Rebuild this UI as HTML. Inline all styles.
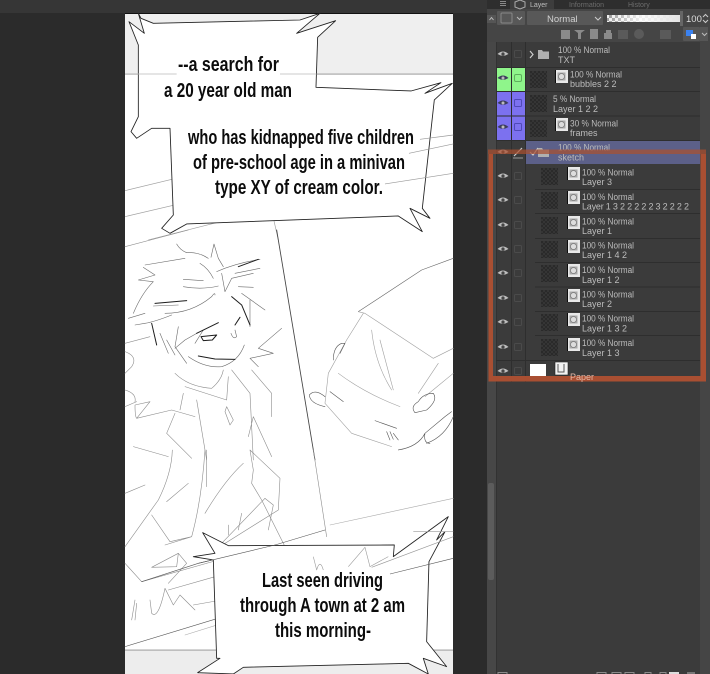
<!DOCTYPE html>
<html><head><meta charset="utf-8"><style>
html,body{margin:0;padding:0;background:#2b2b2b;width:710px;height:674px;overflow:hidden}
svg{display:block}
.t{font-family:"Liberation Sans Narrow","Liberation Sans",sans-serif;font-weight:bold;font-size:20px;fill:#0c0c0c}
.l{font-family:"Liberation Sans",sans-serif;font-size:9px;fill:#bdbdbd}
</style></head><body>
<svg width="710" height="674" viewBox="0 0 710 674" xmlns="http://www.w3.org/2000/svg">
<defs>
<filter id="b" x="-2%" y="-2%" width="104%" height="104%"><feGaussianBlur stdDeviation="0.35"/></filter>
<pattern id="ck" width="4" height="4" patternUnits="userSpaceOnUse"><rect width="4" height="4" fill="#353535"/><rect width="2" height="2" fill="#2b2b2b"/><rect x="2" y="2" width="2" height="2" fill="#2b2b2b"/></pattern>
<pattern id="wc" width="6" height="6" patternUnits="userSpaceOnUse"><rect width="6" height="6" fill="#eee"/><rect width="3" height="3" fill="#999"/><rect x="3" y="3" width="3" height="3" fill="#999"/></pattern>
<linearGradient id="fade"><stop offset="0" stop-color="#fff" stop-opacity="0"/><stop offset=".45" stop-color="#fff" stop-opacity=".85"/><stop offset="1" stop-color="#e4e4e4"/></linearGradient>
<g id="eye"><path d="M-5.500,0Q0,-5 5.500,0Q0,3.500 -5.500,0Z" fill="#bdbdbd"/><circle r="1.600" fill="#444"/></g>
<g id="eyed"><path d="M-5.500,0Q0,-5 5.500,0Q0,3.500 -5.500,0Z" fill="#3c3c5c"/><circle r="1.500" fill="#bbb"/></g>
<g id="box"><rect x="-3.500" y="-3.500" width="7" height="7" rx="1" fill="none" stroke="#4c4c4c"/></g>
<g id="chk"><rect width="17" height="17" fill="url(#ck)"/></g>
<g id="th"><rect width="13" height="13" fill="#e8e8e8"/><rect x="0" y="0" width="1" height="13" fill="#111"/><rect x="2.500" y="2.500" width="8" height="8" fill="#aaa"/><circle cx="6.500" cy="6.500" r="3" fill="#ddd" stroke="#777" stroke-width=".7"/></g>
<g id="fo"><path d="M0,2H4L5,3.500H11V11H0Z" fill="#b0b0b0"/></g>
</defs>

<rect width="710" height="674" fill="#2b2b2b"/>
<rect width="487" height="13" fill="#363636"/>

<!-- canvas -->
<rect x="125" y="13" width="328" height="661" fill="#fff"/>
<rect x="125" y="13" width="328" height="1" fill="#111"/>
<rect x="125" y="14" width="328" height="60" fill="#efefef"/>
<rect x="125" y="73.500" width="328" height="1.200" fill="#aaa"/>
<rect x="125" y="650" width="328" height="24" fill="#ededed"/>
<rect x="125" y="649.500" width="328" height="1.200" fill="#aaa"/>

<g filter="url(#b)">
<!-- top panel speed lines -->
<g transform="translate(125,0) scale(.3333)" fill="none" stroke="#a0a0a0" stroke-width="2">
<path d="M0,572L195,525M0,650L255,590M70,720L385,640M445,640L565,603M435,610L460,720"/>
</g>

<!-- character & van -->
<g transform="translate(125,230) scale(.3333)" fill="none" stroke="#8c8c8c" stroke-width="1.800" stroke-linecap="round" stroke-linejoin="round">
<path d="M0,50L190,0"/>
<path d="M455,0L570,690" stroke="#444" stroke-width="2.600"/>
<path d="M155,42Q165,60 185,68Q220,65 250,85M258,82L267,42L280,85L295,110M275,125Q330,100 405,88M330,130L405,115M60,105L180,85M55,112L90,135L40,150L85,155Q50,190 25,250M10,265L60,250M175,148L235,152M175,170Q230,180 280,168M225,100Q250,115 265,145M290,130L300,185L320,145L385,130M340,170L385,172M85,228L160,225M120,250Q200,250 260,200Q270,185 270,195M30,285L60,280Q90,275 140,255M105,310L130,370M125,330L150,375M160,290L150,350L185,400M150,355L180,330L215,310M210,340L235,300M190,380Q240,415 290,410Q340,395 358,345M318,310Q325,330 335,320L330,300M350,190L420,240M375,290L375,210M470,295L400,355L445,370L375,385L400,410" stroke="#6a6a6a"/>
<path d="M90,220L185,212M215,310L280,278M80,280L95,345M228,320L275,315L262,330L235,332ZM220,378L270,387L330,388M320,200L350,225L375,285M330,285L345,262M340,110L400,88" stroke="#1c1c1c" stroke-width="3"/>
<path d="M150,430Q190,470 260,475Q290,450 295,420M320,420L375,490L385,690M380,420L440,490L440,560M175,490L165,540M310,440L305,510L180,470M305,530L325,570L315,585L300,545ZM35,565L75,515L30,525Q30,560 35,565L140,540L210,560M215,510L245,690M150,550L125,610L200,685M25,650L130,680M370,620L385,560L440,680M0,530L35,515M0,365Q40,380 20,410L0,430M0,340L75,320M0,480Q35,490 30,515"/>
<path d="M700,245L890,120L985,85" stroke="#666"/>
<path d="M700,245L720,250L925,385M715,250L665,330L610,430L600,520L680,610L800,650M640,430Q720,490 825,530M740,300Q750,400 800,480M765,330L805,480M925,385L985,355M880,490L940,400M900,500L985,430" stroke="#a0a0a0"/>
<path d="M625,390Q625,350 650,340L660,340L645,370M615,485L655,515M600,530Q555,520 553,495Q570,475 600,500M880,515Q895,490 925,490Q940,510 905,540L870,548Q855,530 880,515M820,660Q880,650 900,610L960,560L980,545M905,640Q960,620 985,560M900,610Q895,640 915,640M750,572L815,595M785,605L795,630M795,605L805,628M805,610L820,630" stroke="#555"/>
</g>

<g transform="translate(125,450) scale(.3333)" fill="none" stroke="#8c8c8c" stroke-width="1.800" stroke-linecap="round" stroke-linejoin="round">
<path d="M142,0Q140,70 100,150L0,290M80,195L135,275L200,260Q230,150 240,0M245,0L245,110M0,130L60,105M125,155L190,100M240,190Q300,90 355,40M375,0L385,60L380,100L410,150L495,320M375,0L465,85L460,180L300,280M290,280L420,145L445,165L430,240M310,225L310,255M350,190L340,240M0,340L50,395L280,330M80,352L160,310L155,350L80,352M160,310L185,340L130,400M120,285L200,260M130,420L270,380M120,415Q100,510 80,490L75,450M120,415L145,465L165,435L210,480M205,465L290,450M20,510L30,450M30,510L35,460M565,0L605,260"/>
<path d="M615,225L985,145M180,555L340,505" stroke="#aaa"/>
<path d="M50,395L220,340L450,285L600,240M0,590L328,490" stroke="#555"/>
</g>

<!-- top bubble -->
<path transform="translate(125,0) scale(.3333)" d="M40,40L48,55L85,70L525,60L585,40L515,100L632,62L578,112L573,262L858,273L948,248L900,280L982,250L928,300L892,625L915,655L855,625L892,695L820,648L185,672L135,700L110,685L145,645L135,385L80,385L35,415L18,395L40,350L40,135L12,65L58,100Z" fill="#fff" stroke="#222" stroke-width="2.600" stroke-linejoin="round"/>
<g transform="translate(125,0) scale(.3333)" fill="none" stroke="#bbb" stroke-width="2"><path d="M0,222H155M465,222H575"/><path d="M885,418L985,405M852,460L985,432M780,552L985,520" stroke="#999"/></g>

<!-- bottom bubble -->
<path transform="translate(125,450) scale(.3333)" d="M233,248L310,287L808,285L805,320L970,200L935,270L960,245L912,335L905,575L965,650L895,625L910,672L850,640L355,652L325,672L218,668L285,625L275,625L265,330L205,320L270,310Z" fill="#fff" stroke="#222" stroke-width="2.600" stroke-linejoin="round"/>
<g transform="translate(125,450) scale(.3333)" fill="none" stroke="#999" stroke-width="1.800" stroke-linejoin="round">
<path d="M565,320L575,360Q585,325 595,360M670,350L720,292L735,350L790,320M740,352L985,260M865,245L985,245"/>
<path d="M795,372L985,325M220,340L450,285" stroke="#555"/>
</g>
</g>

<!-- comic text -->
<text class="t" x="178" y="71" textLength="101" lengthAdjust="spacingAndGlyphs">--a search for</text>
<text class="t" x="164" y="97" textLength="128" lengthAdjust="spacingAndGlyphs">a 20 year old man</text>
<text class="t" x="188" y="144" textLength="226" lengthAdjust="spacingAndGlyphs">who has kidnapped five children</text>
<text class="t" x="193" y="169" textLength="212" lengthAdjust="spacingAndGlyphs">of pre-school age in a minivan</text>
<text class="t" x="215" y="194" textLength="168" lengthAdjust="spacingAndGlyphs">type XY of cream color.</text>
<text class="t" x="262" y="587" textLength="121" lengthAdjust="spacingAndGlyphs">Last seen driving</text>
<text class="t" x="240" y="612" textLength="165" lengthAdjust="spacingAndGlyphs">through A town at 2 am</text>
<text class="t" x="275" y="637" textLength="96" lengthAdjust="spacingAndGlyphs">this morning-</text>

<!-- panel -->
<g filter="url(#b)">
<rect x="487" y="0" width="223" height="674" fill="#3a3a3a"/>
<rect x="487" y="0" width="10" height="674" fill="#464646"/>
<rect x="700" y="0" width="10" height="674" fill="#454545"/>
<rect x="488" y="483" width="6" height="97" rx="2" fill="#5c5c5c"/>
<rect x="496" y="42" width="1" height="632" fill="#303030"/>
<rect x="487" y="0" width="223" height="9" fill="#2f2f2f"/>
<rect x="487" y="9" width="223" height="33" fill="#454545"/>
<rect x="487" y="15" width="9" height="8" fill="#555"/>
<path d="M489.500,20L491.500,17.500L493.500,20" fill="none" stroke="#bbb"/>
<!-- tabs -->
<rect x="510" y="0" width="44" height="9" fill="#3e3e3e"/>
<rect x="500" y="1" width="6" height="1" fill="#888"/><rect x="500" y="3" width="6" height="1" fill="#888"/><rect x="500" y="5" width="6" height="1" fill="#888"/>
<path d="M515,2L520,0L525,2V7L520,9L515,7Z" fill="none" stroke="#aaa"/>
<text class="l" x="530" y="7" style="font-size:7px">Layer</text>
<text class="l" x="569" y="7" style="font-size:7px;fill:#6c6c6c">Information</text>
<text class="l" x="628" y="7" style="font-size:7px;fill:#6c6c6c">History</text>
<!-- controls -->
<rect x="497" y="11" width="28" height="14" rx="1" fill="#585858"/>
<rect x="501" y="13" width="11" height="10" rx="1" fill="none" stroke="#888"/>
<path d="M517,17L519.500,19.500L522,17" fill="none" stroke="#bbb"/>
<rect x="527" y="11" width="76" height="14" rx="1" fill="#585858"/>
<text class="l" x="547" y="22" style="font-size:9.500px;fill:#d0d0d0">Normal</text>
<path d="M595,17L598,20L601,17" fill="none" stroke="#ccc"/>
<rect x="607" y="15" width="73" height="7" fill="url(#wc)"/>
<rect x="607" y="15" width="73" height="7" fill="url(#fade)"/>
<rect x="680" y="11" width="3" height="15" fill="#666"/>
<text class="l" x="686" y="22" style="font-size:9.500px;fill:#ddd">100</text>
<path d="M703,17L705.500,14.500L708,17M703,20L705.500,22.500L708,20" fill="none" stroke="#ccc"/>
<g fill="#8a8a8a"><rect x="561" y="30" width="9" height="9"/><path d="M574,30H585L581,33V39H578V33Z"/><rect x="590" y="29" width="8" height="10"/><path d="M608,33H611V30H606V33ZM604,33H612V39H604Z"/></g>
<g fill="#5a5a5a"><rect x="618" y="30" width="10" height="9"/><circle cx="639" cy="34" r="5"/><rect x="660" y="30" width="11" height="9"/></g>
<rect x="683" y="27" width="17" height="14" rx="1" fill="#565656"/>
<rect x="686" y="30" width="7" height="6" fill="#3b82f0"/><rect x="691" y="34" width="5" height="5" fill="#fff"/>
<rect x="700" y="27" width="8" height="14" fill="#565656"/><path d="M702,33L704.500,35.500L707,33" fill="none" stroke="#bbb"/>

<!-- colored label columns -->
<rect x="497" y="67" width="14" height="24" fill="#8ff58b"/><rect x="512" y="67" width="13" height="24" fill="#8ff58b"/>
<rect x="497" y="91" width="14" height="49" fill="#7b71ef"/><rect x="512" y="91" width="13" height="49" fill="#7b71ef"/>
<rect x="525" y="140" width="175" height="24" fill="#5b6189"/>

<!-- separators -->
<g fill="#2e2e2e">
<rect x="496" y="67" width="204" height="1"/><rect x="496" y="91" width="204" height="1"/><rect x="496" y="115.500" width="204" height="1"/><rect x="496" y="140" width="204" height="1"/>
<rect x="535" y="189" width="165" height="1"/><rect x="535" y="213" width="165" height="1"/><rect x="535" y="238" width="165" height="1"/><rect x="535" y="262" width="165" height="1"/><rect x="535" y="286.500" width="165" height="1"/><rect x="535" y="311" width="165" height="1"/><rect x="535" y="335" width="165" height="1"/><rect x="496" y="360" width="204" height="1"/>
<rect x="511" y="42" width="1" height="340"/><rect x="525" y="42" width="1" height="340"/>
</g>

<!-- eyes -->
<use href="#eye" x="503" y="54"/><use href="#eyed" x="503" y="78"/><use href="#eyed" x="503" y="103"/><use href="#eyed" x="503" y="127"/><use href="#eye" x="503" y="152"/>
<use href="#eye" x="503" y="176"/><use href="#eye" x="503" y="200"/><use href="#eye" x="503" y="225"/><use href="#eye" x="503" y="249"/><use href="#eye" x="503" y="273"/><use href="#eye" x="503" y="298"/><use href="#eye" x="503" y="322"/><use href="#eye" x="503" y="347"/><use href="#eye" x="503" y="371"/>
<!-- lock boxes -->
<use href="#box" x="518" y="54"/>
<rect x="514.500" y="74.500" width="7" height="7" rx="1.500" fill="none" stroke="#5fb05c"/>
<rect x="514.500" y="99.500" width="7" height="7" rx="1" fill="none" stroke="#5048b8"/>
<rect x="514.500" y="123.500" width="7" height="7" rx="1" fill="none" stroke="#5048b8"/>
<use href="#box" x="518" y="176"/><use href="#box" x="518" y="200"/><use href="#box" x="518" y="225"/><use href="#box" x="518" y="249"/><use href="#box" x="518" y="273"/><use href="#box" x="518" y="298"/><use href="#box" x="518" y="322"/><use href="#box" x="518" y="347"/><use href="#box" x="518" y="371"/>
<path d="M514,156L522,148" stroke="#ccc" stroke-width="1.200"/><path d="M513,158H523" stroke="#999"/>

<!-- top rows -->
<path d="M530,51L533,54.500L530,58" fill="none" stroke="#ccc" stroke-width="1.200"/>
<use href="#fo" x="538" y="48"/>
<text class="l" x="558" y="53" textLength="52" lengthAdjust="spacingAndGlyphs">100 % Normal</text><text class="l" x="558" y="63">TXT</text>

<use href="#chk" x="530" y="71"/><use href="#th" x="555" y="70"/>
<text class="l" x="570" y="77.500" textLength="52" lengthAdjust="spacingAndGlyphs">100 % Normal</text><text class="l" x="570" y="87">bubbles 2 2</text>

<use href="#chk" x="530" y="95"/>
<text class="l" x="553" y="102" textLength="43" lengthAdjust="spacingAndGlyphs">5 % Normal</text><text class="l" x="553" y="112">Layer 1 2 2</text>

<use href="#chk" x="530" y="120"/><use href="#th" x="555" y="118"/>
<text class="l" x="570" y="126.500" textLength="48" lengthAdjust="spacingAndGlyphs">30 % Normal</text><text class="l" x="570" y="136">frames</text>

<path d="M530,152L533,155L538,148" fill="none" stroke="#ccc" stroke-width="1.200"/>
<use href="#fo" x="538" y="146"/>
<text class="l" x="558" y="150.500" textLength="52" lengthAdjust="spacingAndGlyphs">100 % Normal</text><text class="l" x="558" y="160.500">sketch</text>

<!-- sketch children -->
<use href="#chk" x="541" y="168"/><use href="#th" x="567" y="167"/>
<text class="l" x="582" y="175.500" textLength="52" lengthAdjust="spacingAndGlyphs">100 % Normal</text><text class="l" x="582" y="185">Layer 3</text>
<use href="#chk" x="541" y="192"/><use href="#th" x="567" y="191"/>
<text class="l" x="582" y="200" textLength="52" lengthAdjust="spacingAndGlyphs">100 % Normal</text><text class="l" x="582" y="209.500" textLength="107">Layer 1 3 2 2 2 2 2 3 2 2 2 2</text>
<use href="#chk" x="541" y="217"/><use href="#th" x="567" y="216"/>
<text class="l" x="582" y="224.500" textLength="52" lengthAdjust="spacingAndGlyphs">100 % Normal</text><text class="l" x="582" y="234">Layer 1</text>
<use href="#chk" x="541" y="241"/><use href="#th" x="567" y="240"/>
<text class="l" x="582" y="248.500" textLength="52" lengthAdjust="spacingAndGlyphs">100 % Normal</text><text class="l" x="582" y="258">Layer 1 4 2</text>
<use href="#chk" x="541" y="265"/><use href="#th" x="567" y="264"/>
<text class="l" x="582" y="273" textLength="52" lengthAdjust="spacingAndGlyphs">100 % Normal</text><text class="l" x="582" y="283">Layer 1 2</text>
<use href="#chk" x="541" y="290"/><use href="#th" x="567" y="289"/>
<text class="l" x="582" y="297.500" textLength="52" lengthAdjust="spacingAndGlyphs">100 % Normal</text><text class="l" x="582" y="307">Layer 2</text>
<use href="#chk" x="541" y="314"/><use href="#th" x="567" y="313"/>
<text class="l" x="582" y="321.500" textLength="52" lengthAdjust="spacingAndGlyphs">100 % Normal</text><text class="l" x="582" y="331.500">Layer 1 3 2</text>
<use href="#chk" x="541" y="339"/><use href="#th" x="567" y="338"/>
<text class="l" x="582" y="346" textLength="52" lengthAdjust="spacingAndGlyphs">100 % Normal</text><text class="l" x="582" y="356">Layer 1 3</text>

<!-- paper row -->
<rect x="530" y="364" width="16" height="15" fill="#fff"/>
<rect x="555" y="362" width="13" height="13" fill="#f2f2f2" stroke="#222" stroke-width=".6"/>
<path d="M558,364V372H564V364" fill="none" stroke="#555"/>

<!-- red frame -->
<g fill="#a94f30">
<rect x="488" y="149.500" width="218" height="4.500" opacity=".72"/>
<rect x="488.500" y="154" width="4.500" height="227"/>
<rect x="700.500" y="154" width="5.500" height="227"/>
<rect x="488.500" y="376" width="217.500" height="5.500"/>
</g>
<text class="l" x="570" y="380" style="fill:#e3b7a6">Paper</text>

<!-- bottom toolbar -->
<g fill="none" stroke="#8a8a8a"><rect x="498" y="672.500" width="9" height="4"/><rect x="597" y="672.500" width="9" height="4"/><rect x="612" y="672.500" width="9" height="4"/><rect x="625" y="672.500" width="9" height="4"/><rect x="645" y="672.500" width="6" height="4"/><rect x="660" y="672.500" width="6" height="4"/></g>
<rect x="669" y="672" width="10" height="3" fill="#ddd"/>
<rect x="687" y="672" width="8" height="3" fill="#777"/>
</g>
</svg>
</body></html>
